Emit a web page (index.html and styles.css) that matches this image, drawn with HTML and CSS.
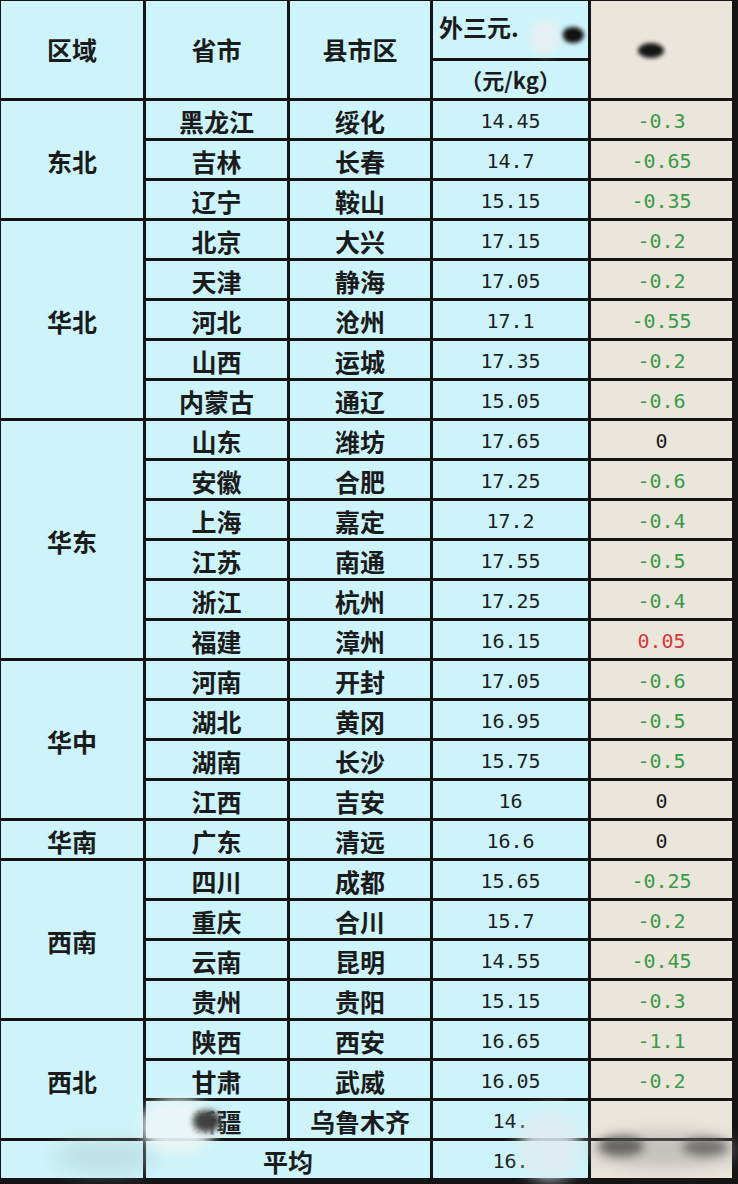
FILE: index.html
```html
<!DOCTYPE html>
<html lang="zh">
<head>
<meta charset="utf-8">
<link rel="stylesheet" href="styles.css">
</head>
<body>
<div class="sheet">
  <div class="cell hd span2">区域</div>
  <div class="cell hd span2">省市</div>
  <div class="cell hd span2">县市区</div>
  <div class="cell hd title">外三元.</div>
  <div class="cell hd chg span2"></div>
  <div class="cell hd unit">（元/kg）</div>

  <div class="cell reg r3">东北</div>
  <div class="cell">黑龙江</div><div class="cell">绥化</div><div class="cell num">14.45</div><div class="cell chg down">-0.3</div>
  <div class="cell">吉林</div><div class="cell">长春</div><div class="cell num">14.7</div><div class="cell chg down">-0.65</div>
  <div class="cell">辽宁</div><div class="cell">鞍山</div><div class="cell num">15.15</div><div class="cell chg down">-0.35</div>

  <div class="cell reg r5">华北</div>
  <div class="cell">北京</div><div class="cell">大兴</div><div class="cell num">17.15</div><div class="cell chg down">-0.2</div>
  <div class="cell">天津</div><div class="cell">静海</div><div class="cell num">17.05</div><div class="cell chg down">-0.2</div>
  <div class="cell">河北</div><div class="cell">沧州</div><div class="cell num">17.1</div><div class="cell chg down">-0.55</div>
  <div class="cell">山西</div><div class="cell">运城</div><div class="cell num">17.35</div><div class="cell chg down">-0.2</div>
  <div class="cell">内蒙古</div><div class="cell">通辽</div><div class="cell num">15.05</div><div class="cell chg down">-0.6</div>

  <div class="cell reg r6">华东</div>
  <div class="cell">山东</div><div class="cell">潍坊</div><div class="cell num">17.65</div><div class="cell chg zero">0</div>
  <div class="cell">安徽</div><div class="cell">合肥</div><div class="cell num">17.25</div><div class="cell chg down">-0.6</div>
  <div class="cell">上海</div><div class="cell">嘉定</div><div class="cell num">17.2</div><div class="cell chg down">-0.4</div>
  <div class="cell">江苏</div><div class="cell">南通</div><div class="cell num">17.55</div><div class="cell chg down">-0.5</div>
  <div class="cell">浙江</div><div class="cell">杭州</div><div class="cell num">17.25</div><div class="cell chg down">-0.4</div>
  <div class="cell">福建</div><div class="cell">漳州</div><div class="cell num">16.15</div><div class="cell chg up">0.05</div>

  <div class="cell reg r4">华中</div>
  <div class="cell">河南</div><div class="cell">开封</div><div class="cell num">17.05</div><div class="cell chg down">-0.6</div>
  <div class="cell">湖北</div><div class="cell">黄冈</div><div class="cell num">16.95</div><div class="cell chg down">-0.5</div>
  <div class="cell">湖南</div><div class="cell">长沙</div><div class="cell num">15.75</div><div class="cell chg down">-0.5</div>
  <div class="cell">江西</div><div class="cell">吉安</div><div class="cell num">16</div><div class="cell chg zero">0</div>

  <div class="cell reg">华南</div>
  <div class="cell">广东</div><div class="cell">清远</div><div class="cell num">16.6</div><div class="cell chg zero">0</div>

  <div class="cell reg r4">西南</div>
  <div class="cell">四川</div><div class="cell">成都</div><div class="cell num">15.65</div><div class="cell chg down">-0.25</div>
  <div class="cell">重庆</div><div class="cell">合川</div><div class="cell num">15.7</div><div class="cell chg down">-0.2</div>
  <div class="cell">云南</div><div class="cell">昆明</div><div class="cell num">14.55</div><div class="cell chg down">-0.45</div>
  <div class="cell">贵州</div><div class="cell">贵阳</div><div class="cell num">15.15</div><div class="cell chg down">-0.3</div>

  <div class="cell reg r3">西北</div>
  <div class="cell">陕西</div><div class="cell">西安</div><div class="cell num">16.65</div><div class="cell chg down">-1.1</div>
  <div class="cell">甘肃</div><div class="cell">武威</div><div class="cell num">16.05</div><div class="cell chg down">-0.2</div>
  <div class="cell">新疆</div><div class="cell">乌鲁木齐</div><div class="cell num">14.</div><div class="cell chg"></div>

  <div class="cell"></div>
  <div class="cell wide">平均</div>
  <div class="cell num">16.</div>
  <div class="cell chg"></div>

  <div class="blot b1"></div>
  <div class="blot b2"></div>
  <div class="blot b3"></div>
  <div class="haze h1"></div>
  <div class="haze h2"></div>
  <div class="haze h3"></div>
  <div class="haze h4"></div>
  <div class="blot b4"></div>
  <div class="blot b5"></div>
  <div class="blot b6"></div>
</div>
</body>
</html>
```
FILE: styles.css
```css
html, body {
  margin: 0;
  padding: 0;
  background: #141414;
}

.sheet {
  position: relative;
  width: 738px;
  height: 1184px;
  box-sizing: border-box;
  padding: 1px 6px 6px 1px;
  background: #141414;
  display: grid;
  grid-template-columns: 142px 141px 140px 155px 141px;
  grid-template-rows: 57px 37px repeat(27, 37px);
  gap: 3px;
  overflow: hidden;
}

.cell {
  background: #cdf4fa;
  display: flex;
  align-items: center;
  justify-content: center;
  padding-top: 3px;
  box-sizing: border-box;
  font-family: "Noto Sans CJK SC", "DejaVu Sans", sans-serif;
  font-weight: 700;
  font-size: 25px;
  color: #1b1b1b;
  line-height: 1;
  white-space: nowrap;
  overflow: hidden;
}

.span2 { grid-row: span 2; }
.r3 { grid-row: span 3; }
.r4 { grid-row: span 4; }
.r5 { grid-row: span 5; }
.r6 { grid-row: span 6; }
.wide { grid-column: span 2; }

.hd { padding-top: 0; }

.hd.title {
  justify-content: flex-start;
  padding-left: 6px;
  padding-bottom: 6px;
  font-size: 24px;
}

.hd.unit {
  font-size: 22px;
  padding-bottom: 2px;
}

.num {
  font-family: "DejaVu Sans Mono", "Liberation Mono", monospace;
  font-weight: 400;
  font-size: 20px;
  color: #1e1e1e;
}

.chg {
  background: #ebe6dc;
  font-family: "DejaVu Sans Mono", "Liberation Mono", monospace;
  font-weight: 400;
  font-size: 20px;
}

.chg.down { color: #3a9a48; }
.chg.up { color: #d8393a; }
.chg.zero { color: #1b1b1b; }

.blot, .haze {
  position: absolute;
  border-radius: 50%;
  pointer-events: none;
}

.b1 {
  left: 562px; top: 27px; width: 22px; height: 16px;
  background: #111;
  filter: blur(2px);
}
.b2 {
  left: 638px; top: 43px; width: 26px; height: 15px;
  background: #151515;
  filter: blur(2px);
}
.b3 {
  left: 530px; top: 20px; width: 30px; height: 34px;
  background: rgba(235, 240, 242, 0.85);
  filter: blur(4px);
}
.h1 {
  left: 55px; top: 1140px; width: 100px; height: 34px;
  background: rgba(175, 200, 205, 0.45);
  filter: blur(9px);
}
.h2 {
  left: 140px; top: 1098px; width: 76px; height: 56px;
  background: rgba(235, 245, 246, 0.92);
  filter: blur(6px);
}
.h3 {
  left: 590px; top: 1132px; width: 150px; height: 36px;
  background: rgba(150, 150, 150, 0.45);
  filter: blur(8px);
}
.h4 {
  left: 520px; top: 1110px; width: 60px; height: 70px;
  background: rgba(225, 235, 238, 0.85);
  filter: blur(8px);
}
.b4 {
  left: 193px; top: 1110px; width: 28px; height: 22px;
  background: rgba(55, 55, 55, 0.95);
  filter: blur(3px);
}
.b5 {
  left: 598px; top: 1136px; width: 46px; height: 20px;
  background: rgba(70, 70, 70, 0.75);
  filter: blur(5px);
}
.b6 {
  left: 682px; top: 1138px; width: 46px; height: 18px;
  background: rgba(80, 80, 80, 0.7);
  filter: blur(5px);
}
```
